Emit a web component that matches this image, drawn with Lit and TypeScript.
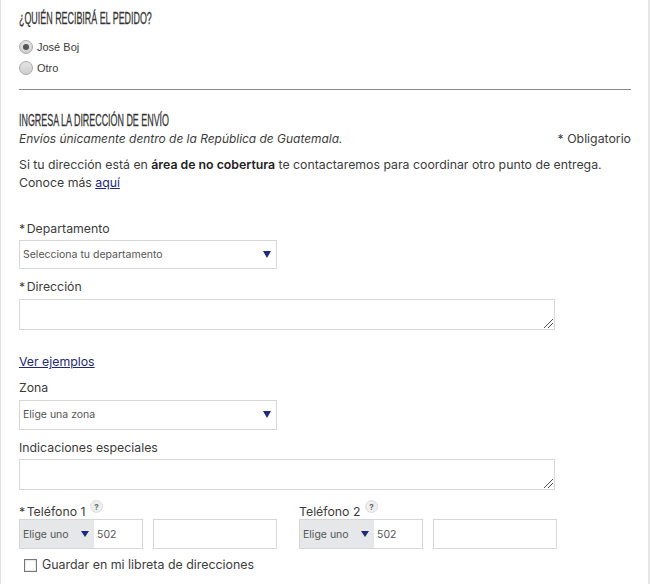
import { LitElement, html, css } from "lit";
import { customElement } from "lit/decorators.js";

@customElement("app-root")
export class AppRoot extends LitElement {
  static styles = css`
    :host { display: block; width: 650px; height: 584px; box-sizing: border-box; overflow: hidden; background: #fff;
      border-left: 1px solid #e2e2e2; border-right: 2px solid #e6e6e6; padding-left: 18px; padding-right: 17px;
      font-family: Inter, "Liberation Sans", sans-serif; font-size: 12.3px; color: #3c3c3c; }
    h2 { margin: 0; font-family: "Liberation Sans", sans-serif; font-weight: 400; font-size: 17px; line-height: 18px; color: #333; -webkit-text-stroke: 0.3px #333; transform-origin: left; transform: scaleX(0.524); white-space: nowrap; }
    .h1 { padding-top: 10px; }
    .radios { margin-top: 11px; display: flex; flex-direction: column; gap: 5px; font-family: "Liberation Sans", sans-serif; font-size: 11px; }
    .radio { display: flex; align-items: center; gap: 4px; height: 16px; }
    .dot { width: 12px; height: 12px; border-radius: 50%; border: 1px solid #aaa; background: linear-gradient(#e4e4e4, #cfcfcf); display: flex; align-items: center; justify-content: center; }
    .dot.on::after { content: ""; width: 6px; height: 6px; border-radius: 50%; background: #555; }
    hr { margin: 13px 0 0; border: 0; border-top: 1px solid #8a8a8a; }
    .h2 { margin-top: 22px; }
    .sub { display: flex; justify-content: space-between; line-height: 16px; margin-top: 1px; }
    em { font-style: italic; font-size: 11.95px; }
    p { margin: 9px 0 0; line-height: 18px; }
    b { font-weight: 600; color: #222; }
    a { color: #1e2a78; text-decoration: underline; }
    label { display: block; line-height: 16px; height: 16px; }
    .ast { margin-right: -2px; }
    .sel { box-sizing: border-box; width: 258px; height: 29px; margin-top: 3px; border: 1px solid #d6d6d6; display: flex; align-items: center; justify-content: space-between; padding: 0 5px 1px 3px; font-size: 10.5px; color: #555; }
    .tri { width: 0; height: 0; border-left: 4.5px solid transparent; border-right: 4.5px solid transparent; border-top: 7px solid #1f2a7c; }
    .ta { box-sizing: border-box; position: relative; width: 536px; height: 31px; margin-top: 4px; border: 1px solid #d6d6d6; }
    .grip { position: absolute; right: 0; bottom: 0; }
    .tel { display: flex; margin-top: 10px; }
    .col { width: 280px; }
    .q { display: inline-flex; vertical-align: 6px; width: 13px; height: 13px; border-radius: 50%; background: #eee; border: 1px solid #ddd; box-sizing: border-box; align-items: center; justify-content: center; font-size: 8px; font-weight: 700; color: #666; margin-left: 1px; }
    .inputs { display: flex; margin-top: 3px; gap: 10px; }
    .group { display: flex; width: 124px; height: 30px; box-sizing: border-box; border: 1px solid #d6d6d6; font-size: 10.5px; color: #555; }
    .pre { width: 74px; background: #e5e7e9; display: flex; align-items: center; justify-content: space-between; padding: 0 5px 0 3px; box-sizing: border-box; }
    .pre .tri { border-left-width: 4px; border-right-width: 4px; border-top-width: 6px; }
    .num { padding-left: 3px; display: flex; align-items: center; }
    .box { box-sizing: border-box; width: 124px; height: 30px; border: 1px solid #d6d6d6; }
    .save { display: flex; align-items: center; gap: 5px; margin: 8px 0 0 5px; line-height: 16px; font-size: 12.4px; }
    .check { width: 11px; height: 11px; border: 1px solid #777; background: #fff; box-shadow: inset 0 0 2px #bbb; }
    .m29 { margin-top: 29px; }
    .m10 { margin-top: 10px; }
    .ver { margin-top: 24px; line-height: 16px; }
    .low { margin-top: 4px; height: 30px; }
    .tight { margin-top: 3px; }
  `;

  private grip() {
    return html`<svg class="grip" width="11" height="11" viewBox="0 0 11 11"><path d="M1 10 L10 1 M5 10 L10 5" stroke="#555" stroke-width="1" fill="none"/></svg>`;
  }

  private phone(label: string, req: boolean) {
    return html`<div class="col">
      <label>${req ? html`<span class="ast">*</span> ` : ""}${label} <span class="q">?</span></label>
      <div class="inputs">
        <div class="group"><div class="pre">Elige uno <span class="tri"></span></div><div class="num">502</div></div>
        <div class="box"></div>
      </div>
    </div>`;
  }

  render() {
    return html`
      <div class="h1"><h2>¿QUIÉN RECIBIRÁ EL PEDIDO?</h2></div>
      <div class="radios">
        <div class="radio"><span class="dot on"></span>José Boj</div>
        <div class="radio"><span class="dot"></span>Otro</div>
      </div>
      <hr />
      <div class="h2"><h2>INGRESA LA DIRECCIÓN DE ENVÍO</h2></div>
      <div class="sub"><em>Envíos únicamente dentro de la República de Guatemala.</em><span>* Obligatorio</span></div>
      <p>Si tu dirección está en <b>área de no cobertura</b> te contactaremos para coordinar otro punto de entrega.<br />Conoce más <a href="#">aquí</a></p>
      <label class="m29"><span class="ast">*</span> Departamento</label>
      <div class="sel">Selecciona tu departamento <span class="tri"></span></div>
      <label class="m10"><span class="ast">*</span> Dirección</label>
      <div class="ta">${this.grip()}</div>
      <div class="ver"><a href="#">Ver ejemplos</a></div>
      <label class="m10">Zona</label>
      <div class="sel low">Elige una zona <span class="tri"></span></div>
      <label class="m10">Indicaciones especiales</label>
      <div class="ta tight">${this.grip()}</div>
      <div class="tel">${this.phone("Teléfono 1", true)}${this.phone("Teléfono 2", false)}</div>
      <div class="save"><span class="check"></span>Guardar en mi libreta de direcciones</div>
    `;
  }
}
